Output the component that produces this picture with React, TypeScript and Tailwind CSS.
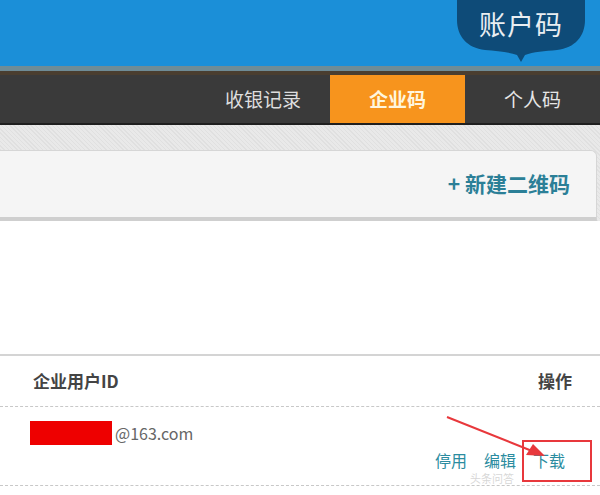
const font = { fontFamily: '"Noto Sans CJK SC", "Noto Sans", sans-serif' }

function Bubble() {
  return (
    <div className="relative h-[62px] w-[128px]">
      <svg className="absolute inset-0" width="128" height="62" viewBox="0 0 128 62">
        <path
          d="M0 0 H128 V20 C128 36 118 48 100 50 C88 51 76 52 68 55 L64 62 L60 55 C52 52 40 51 28 50 C10 48 0 36 0 20 Z"
          fill="#0e4b78"
        />
      </svg>
      <div className="relative flex h-[48px] items-center justify-center text-[27px] tracking-[1px] text-[#e9eef2]">
        账户码
      </div>
    </div>
  )
}

export default function App() {
  return (
    <div className="h-[495px] w-[600px] overflow-hidden bg-white" style={font}>
      {/* 顶部蓝色栏 */}
      <div className="flex h-[66px] justify-end bg-[#1b8fd8] pr-[15px]">
        <Bubble />
      </div>
      <div className="h-[5px] bg-[#6f8c96]" />

      {/* 导航 */}
      <div className="flex h-[54px] items-stretch justify-end border-t-[4px] border-b-[2px] border-t-[#4a3e30] border-b-[#1f1f1f] bg-[#3a3a3a]">
        <div className="flex w-[134px] items-center justify-center text-[19px] text-[#dedede]">收银记录</div>
        <div className="flex w-[135px] items-center justify-center bg-[#f7941d] text-[19px] font-bold text-[#fff6df]">企业码</div>
        <div className="flex w-[135px] items-center justify-center text-[19px] text-[#e6e6e6]">个人码</div>
      </div>

      {/* 纹理背景区 */}
      <div className="bg-[#e3e3e3] bg-[repeating-linear-gradient(45deg,#e9e9e9_0px,#e9e9e9_2px,#e0e0e0_2px,#e0e0e0_3px)] pt-[25px] pr-[3px]">
        <div className="flex h-[71px] items-center justify-end rounded-tr-[6px] border-t border-r border-b-[4px] border-[#d6d6d6] border-b-[#cfcfcf] bg-[#f5f5f5] pr-[26px]">
          <span className="text-[21px] font-bold text-[#2b7f97]">+ 新建二维码</span>
        </div>
      </div>

      <div className="h-[133px] bg-white" />

      {/* 表格 */}
      <div className="border-t-2 border-[#d4d4d4]">
        <div className="flex h-[51px] items-center justify-between border-b border-dashed border-[#c8c8c8] pl-[33px] pr-[28px] text-[17px] font-bold text-[#444]">
          <span>企业用户ID</span>
          <span>操作</span>
        </div>
        <div className="relative h-[79px] border-b border-dashed border-[#c8c8c8]">
          <div className="flex items-center pt-[14px] pl-[30px]">
            <span className="h-[24px] w-[82px] bg-[#ee0000]" />
            <span className="ml-[3px] text-[16px] text-[#666]">@163.com</span>
          </div>
          <div className="flex justify-end gap-[17px] pt-[4px] pr-[35px] text-[16px] leading-[22px] text-[#2b8ca0]">
            <span>停用</span>
            <span>编辑</span>
            <span>下载</span>
          </div>

          {/* 标注 */}
          <div className="absolute left-[522px] top-[33px] h-[42px] w-[70px] border-2 border-[#e8383c]" />
          <svg className="absolute left-0 top-0" width="600" height="79" viewBox="0 0 600 79">
            <line x1="447" y1="10" x2="532" y2="44" stroke="#e8383c" strokeWidth="2" />
            <polygon points="545,49 526,48 533,37" fill="#e8383c" />
          </svg>
          <div className="absolute left-[470px] top-[65px] text-[11px] leading-[12px] text-[#bbbbbb]/60">
            头条问答
          </div>
        </div>
      </div>
    </div>
  )
}
